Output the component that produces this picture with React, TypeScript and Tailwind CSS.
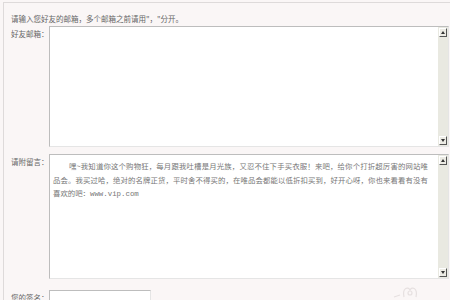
import React from 'react';

const ScrollBar = () => (
  <div className="flex w-[10px] flex-col bg-[#e9e9e1]">
    <div className="m-[1px] flex h-[9px] items-center justify-center border-r border-b border-r-[#555] border-b-[#555] bg-[#ecebe4] border-t border-l border-t-white border-l-white">
      <div className="h-0 w-0 border-x-[2.5px] border-b-[3px] border-x-transparent border-b-[#333]" />
    </div>
    <div className="flex-1" />
    <div className="m-[1px] flex h-[9px] items-center justify-center border-r border-b border-r-[#555] border-b-[#555] bg-[#ecebe4] border-t border-l border-t-white border-l-white">
      <div className="h-0 w-0 border-x-[2.5px] border-t-[3px] border-x-transparent border-t-[#333]" />
    </div>
  </div>
);

const Row = ({ label, children, className = '' }: { label: string; children: React.ReactNode; className?: string }) => (
  <div className={`flex items-start ${className}`}>
    <div className="w-[45px] shrink-0 pl-[7px] pt-[3px] text-[7.5px] leading-[10px] text-[#666]">{label}</div>
    {children}
  </div>
);

export default function App() {
  return (
    <div
      className="h-[300px] w-[450px] overflow-hidden bg-[#faf6f6] pt-[2px]"
      style={{ fontFamily: '"Noto Sans CJK SC", "Noto Sans", sans-serif' }}
    >
      <div className="ml-[3px] h-full border-t border-l border-[#dedada]">
        <div className="pl-[7px] pt-[11px] text-[7.5px] leading-[10px] text-[#666]">
          请输入您好友的邮箱，多个邮箱之前请用"，"分开。
        </div>
        <Row label="好友邮箱：" className="mt-[2px]">
          <div className="flex h-[121px] w-[400px] border border-t-[#bdbdbd] border-l-[#bdbdbd] border-r-[#e5e5e5] border-b-[#e5e5e5] bg-white">
            <div className="flex-1" />
            <ScrollBar />
          </div>
        </Row>
        <Row label="请附留言：" className="mt-[7px]">
          <div className="flex h-[125px] w-[400px] border border-t-[#bdbdbd] border-l-[#bdbdbd] border-r-[#e5e5e5] border-b-[#e5e5e5] bg-white">
            <div className="flex-1 overflow-hidden px-[3px] pt-[4px] text-[7.4px] leading-[13.5px] text-[#777]">
              <div className="w-[375px] pl-[16px] text-justify [text-align-last:justify]">嘿~我知道你这个购物狂，每月跟我吐槽是月光族，又忍不住下手买衣服！来吧，给你个打折超厉害的网站唯</div>
              <div className="w-[375px] text-justify [text-align-last:justify]">品会。我买过哈，绝对的名牌正货，平时舍不得买的，在唯品会都能以低折扣买到，好开心呀，你也来看看有没有</div>
              <div className="whitespace-nowrap">
                喜欢的吧：<span style={{ fontFamily: '"Liberation Mono", monospace' }}>www.vip.com</span>
              </div>
            </div>
            <ScrollBar />
          </div>
        </Row>
        <Row label="您的签名：" className="mt-[11px]">
          <div className="h-[20px] w-[102px] border border-t-[#bdbdbd] border-l-[#bdbdbd] border-r-[#e5e5e5] border-b-[#e5e5e5] bg-white" />
          <div className="ml-auto mr-[28px] mt-[-6px]">
            <svg width="30" height="14" viewBox="0 0 30 14" fill="none" stroke="#e6e0e0" strokeWidth="1.2">
              <path d="M2 13 L8 11" />
              <path d="M12 13 C10 4 16 2 18 6 C20 2 26 4 24 13" />
              <circle cx="18" cy="9" r="2" />
            </svg>
          </div>
        </Row>
      </div>
    </div>
  );
}
